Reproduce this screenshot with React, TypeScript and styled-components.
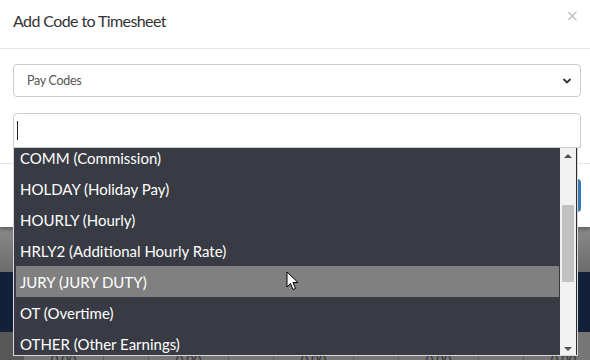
import React from 'react';
import styled, { createGlobalStyle } from 'styled-components';

const GlobalStyle = createGlobalStyle`
  html, body {
    margin: 0;
    padding: 0;
    width: 590px;
    height: 360px;
    overflow: hidden;
    background: #6b6b6b;
    font-family: Lato, "Open Sans", sans-serif;
  }
`;

const codes = [
  'COMM (Commission)',
  'HOLDAY (Holiday Pay)',
  'HOURLY (Hourly)',
  'HRLY2 (Additional Hourly Rate)',
  'JURY (JURY DUTY)',
  'OT (Overtime)',
  'OTHER (Other Earnings)',
];

const Screen = styled.div`
  position: relative;
  width: 590px;
  height: 360px;
  overflow: hidden;
`;

const Modal = styled.div`
  position: relative;
  z-index: 2;
  background: #fff;
  box-shadow: 0 2px 4px rgba(0, 0, 0, 0.35);
`;

const Header = styled.div`
  height: 49px;
  box-sizing: border-box;
  padding: 0 11px 8px 13px;
  display: flex;
  align-items: center;
  justify-content: space-between;
  border-bottom: 1px solid #e5e5e5;
`;

const Title = styled.h4`
  margin: 0;
  font-size: 16px;
  letter-spacing: -0.6px;
  font-weight: 400;
  color: #333;
`;

const Close = styled.span`
  color: #c4c4c4;
  font-size: 16px;
  font-family: "DejaVu Sans", sans-serif;
  line-height: 1;
  margin-top: -8px;
`;

const Body = styled.div`
  padding: 15px 9px 15px 13px;
  display: flex;
  flex-direction: column;
  gap: 16px;
`;

const Select = styled.div`
  height: 33px;
  box-sizing: border-box;
  border: 1px solid #ccc;
  border-radius: 4px;
  padding: 0 8px 0 13px;
  display: flex;
  align-items: center;
  justify-content: space-between;
  font-size: 12.5px;
  letter-spacing: -0.3px;
  color: #555;
`;

const Input = styled.div`
  position: relative;
  height: 35px;
  box-sizing: border-box;
  border: 1px solid #ccc;
  border-radius: 4px 4px 0 0;
  padding-left: 3px;
  display: flex;
  align-items: center;
`;

const Caret = styled.span`
  width: 1px;
  height: 19px;
  background: #222;
`;

const Footer = styled.div`
  border-top: 1px solid #e5e5e5;
  padding: 15px 9px 15px 13px;
  display: flex;
  justify-content: flex-end;
`;

const Button = styled.div`
  width: 80px;
  height: 33px;
  border-radius: 4px;
  background: #337ab7;
`;

const Dropdown = styled.div`
  position: absolute;
  left: -1px;
  top: 34px;
  width: 565px;
  height: 208px;
  box-sizing: border-box;
  border: 1px solid #d8d8d8;
  border-top: none;
  background: #383b43;
  display: flex;
  overflow: hidden;
  z-index: 5;
`;

const Options = styled.div`
  flex: 1;
  overflow: hidden;
  padding: 0 1px 0 2px;
`;

const Scroller = styled.div`
  margin-top: -6px;
`;

const Option = styled.div<{ $active?: boolean }>`
  height: 31px;
  display: flex;
  align-items: center;
  padding-left: 4px;
  font-size: 15px;
  color: #fff;
  white-space: nowrap;
  background: ${(p) => (p.$active ? '#808080' : 'transparent')};
  border-top: 1px solid transparent;
  box-sizing: border-box;
`;

const ScrollTrack = styled.div`
  width: 17px;
  background: #f1f1f1;
  border-right: 1px solid #2a2c31;
  display: flex;
  flex-direction: column;
  align-items: center;
  justify-content: space-between;
  padding: 4px 0;
  box-sizing: border-box;
  position: relative;
`;

const Thumb = styled.div`
  position: absolute;
  left: 2px;
  right: 2px;
  top: 57px;
  height: 77px;
  background: #c1c1c1;
`;

const Arrow = styled.div<{ $down?: boolean }>`
  width: 0;
  height: 0;
  border-left: 4px solid transparent;
  border-right: 4px solid transparent;
  ${(p) => (p.$down ? 'border-top: 4px solid #505050;' : 'border-bottom: 4px solid #505050;')}
  margin-top: 2px;
`;

const Page = styled.div`
  display: flex;
  flex-direction: column;
`;

const GreyBand = styled.div`
  height: 45px;
  background: linear-gradient(#8a8a8a, #6c6c6c);
`;

const NavyBand = styled.div`
  height: 60px;
  background: #13203a;
`;

const TableRow = styled.div`
  height: 40px;
  display: grid;
  grid-template-columns: 24px repeat(5, 80px 45px);
  background: #6a6a6a;
`;

const Cell = styled.div<{ $lead?: boolean }>`
  border-right: 1px solid #5d5d5d;
  background: ${(p) => (p.$lead ? '#575757' : '#767676')};
  font-size: 13px;
  color: #333;
  padding-top: 20px;
  text-align: center;
`;

const Pointer = styled.svg`
  position: absolute;
  left: 286px;
  top: 271px;
  z-index: 10;
`;

const Chevron = () => (
  <svg width="10" height="8" viewBox="0 0 10 8">
    <path d="M1.5 2 L5 5.5 L8.5 2" fill="none" stroke="#333" strokeWidth="1.8" />
  </svg>
);

export default function App() {
  return (
    <Screen>
      <GlobalStyle />
      <Modal>
        <Header>
          <Title>Add Code to Timesheet</Title>
          <Close>×</Close>
        </Header>
        <Body>
          <Select>
            <span>Pay Codes</span>
            <Chevron />
          </Select>
          <Input>
            <Caret />
            <Dropdown>
              <Options>
                <Scroller>
                  {codes.map((c) => (
                    <Option key={c} $active={c.startsWith('JURY')}>
                      {c}
                    </Option>
                  ))}
                </Scroller>
              </Options>
              <ScrollTrack>
                <Arrow />
                <Thumb />
                <Arrow $down />
              </ScrollTrack>
            </Dropdown>
          </Input>
        </Body>
        <Footer>
          <Button />
        </Footer>
      </Modal>
      <Page>
        <GreyBand />
        <NavyBand />
        <TableRow>
          <Cell $lead />
          {[0, 1, 2, 3, 4].map((i) => (
            <React.Fragment key={i}>
              <Cell>0.00</Cell>
              <Cell />
            </React.Fragment>
          ))}
        </TableRow>
      </Page>
      <Pointer width="14" height="20" viewBox="0 0 14 20">
        <path d="M1 1 L1 16 L4.5 12.5 L7 18.5 L9.5 17.5 L7 11.5 L12 11.5 Z" fill="#fff" stroke="#000" strokeWidth="1" />
      </Pointer>
    </Screen>
  );
}
